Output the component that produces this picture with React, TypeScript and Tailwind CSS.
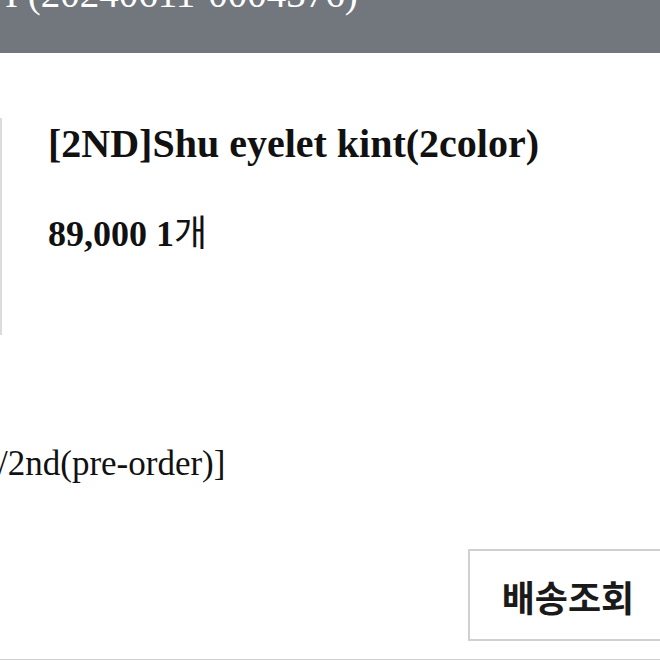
export default function App() {
    return (
        <div className="flex h-[660px] w-[660px] flex-col overflow-hidden bg-white text-[#111]">
            <div className="h-[53px] shrink-0 overflow-hidden bg-[#72767d]">
                <p className="-mt-[26px] whitespace-nowrap pl-[5px] font-['Liberation_Serif',serif] text-[39px] leading-none text-white">
                    I (20240611-0004376)
                </p>
            </div>

            <div className="mt-[65px] flex">
                <div className="h-[217px] w-[2px] shrink-0 bg-[#dcdcdc]" />
                <div className="pl-[46px] font-['Liberation_Serif','Noto_Sans_CJK_KR',serif] font-bold">
                    <h2 className="mt-[6px] whitespace-nowrap text-[40px] leading-none">
                        [2ND]Shu eyelet kint(2color)
                    </h2>
                    <p className="mt-[48px] whitespace-nowrap text-[36px] leading-none">
                        89,000 1<span className="font-['Noto_Sans_CJK_KR',sans-serif] font-normal">개</span>
                    </p>
                </div>
            </div>

            <p className="-ml-[2px] mt-[111px] whitespace-nowrap font-['Liberation_Serif',serif] text-[35px] leading-none">
                /2nd(pre-order)]
            </p>

            <div className="mt-[68px] flex justify-end">
                <button
                    type="button"
                    className="-mr-[8px] flex h-[92px] w-[200px] items-center justify-center border-2 border-[#d0d0d0] bg-white pt-[2px] font-['Noto_Sans_CJK_KR',sans-serif] text-[36px] font-bold text-[#1a1a1a]"
                >
                    배송조회
                </button>
            </div>

            <div className="mt-[18px] border-t-2 border-[#cfcfcf]" />
        </div>
    );
}
